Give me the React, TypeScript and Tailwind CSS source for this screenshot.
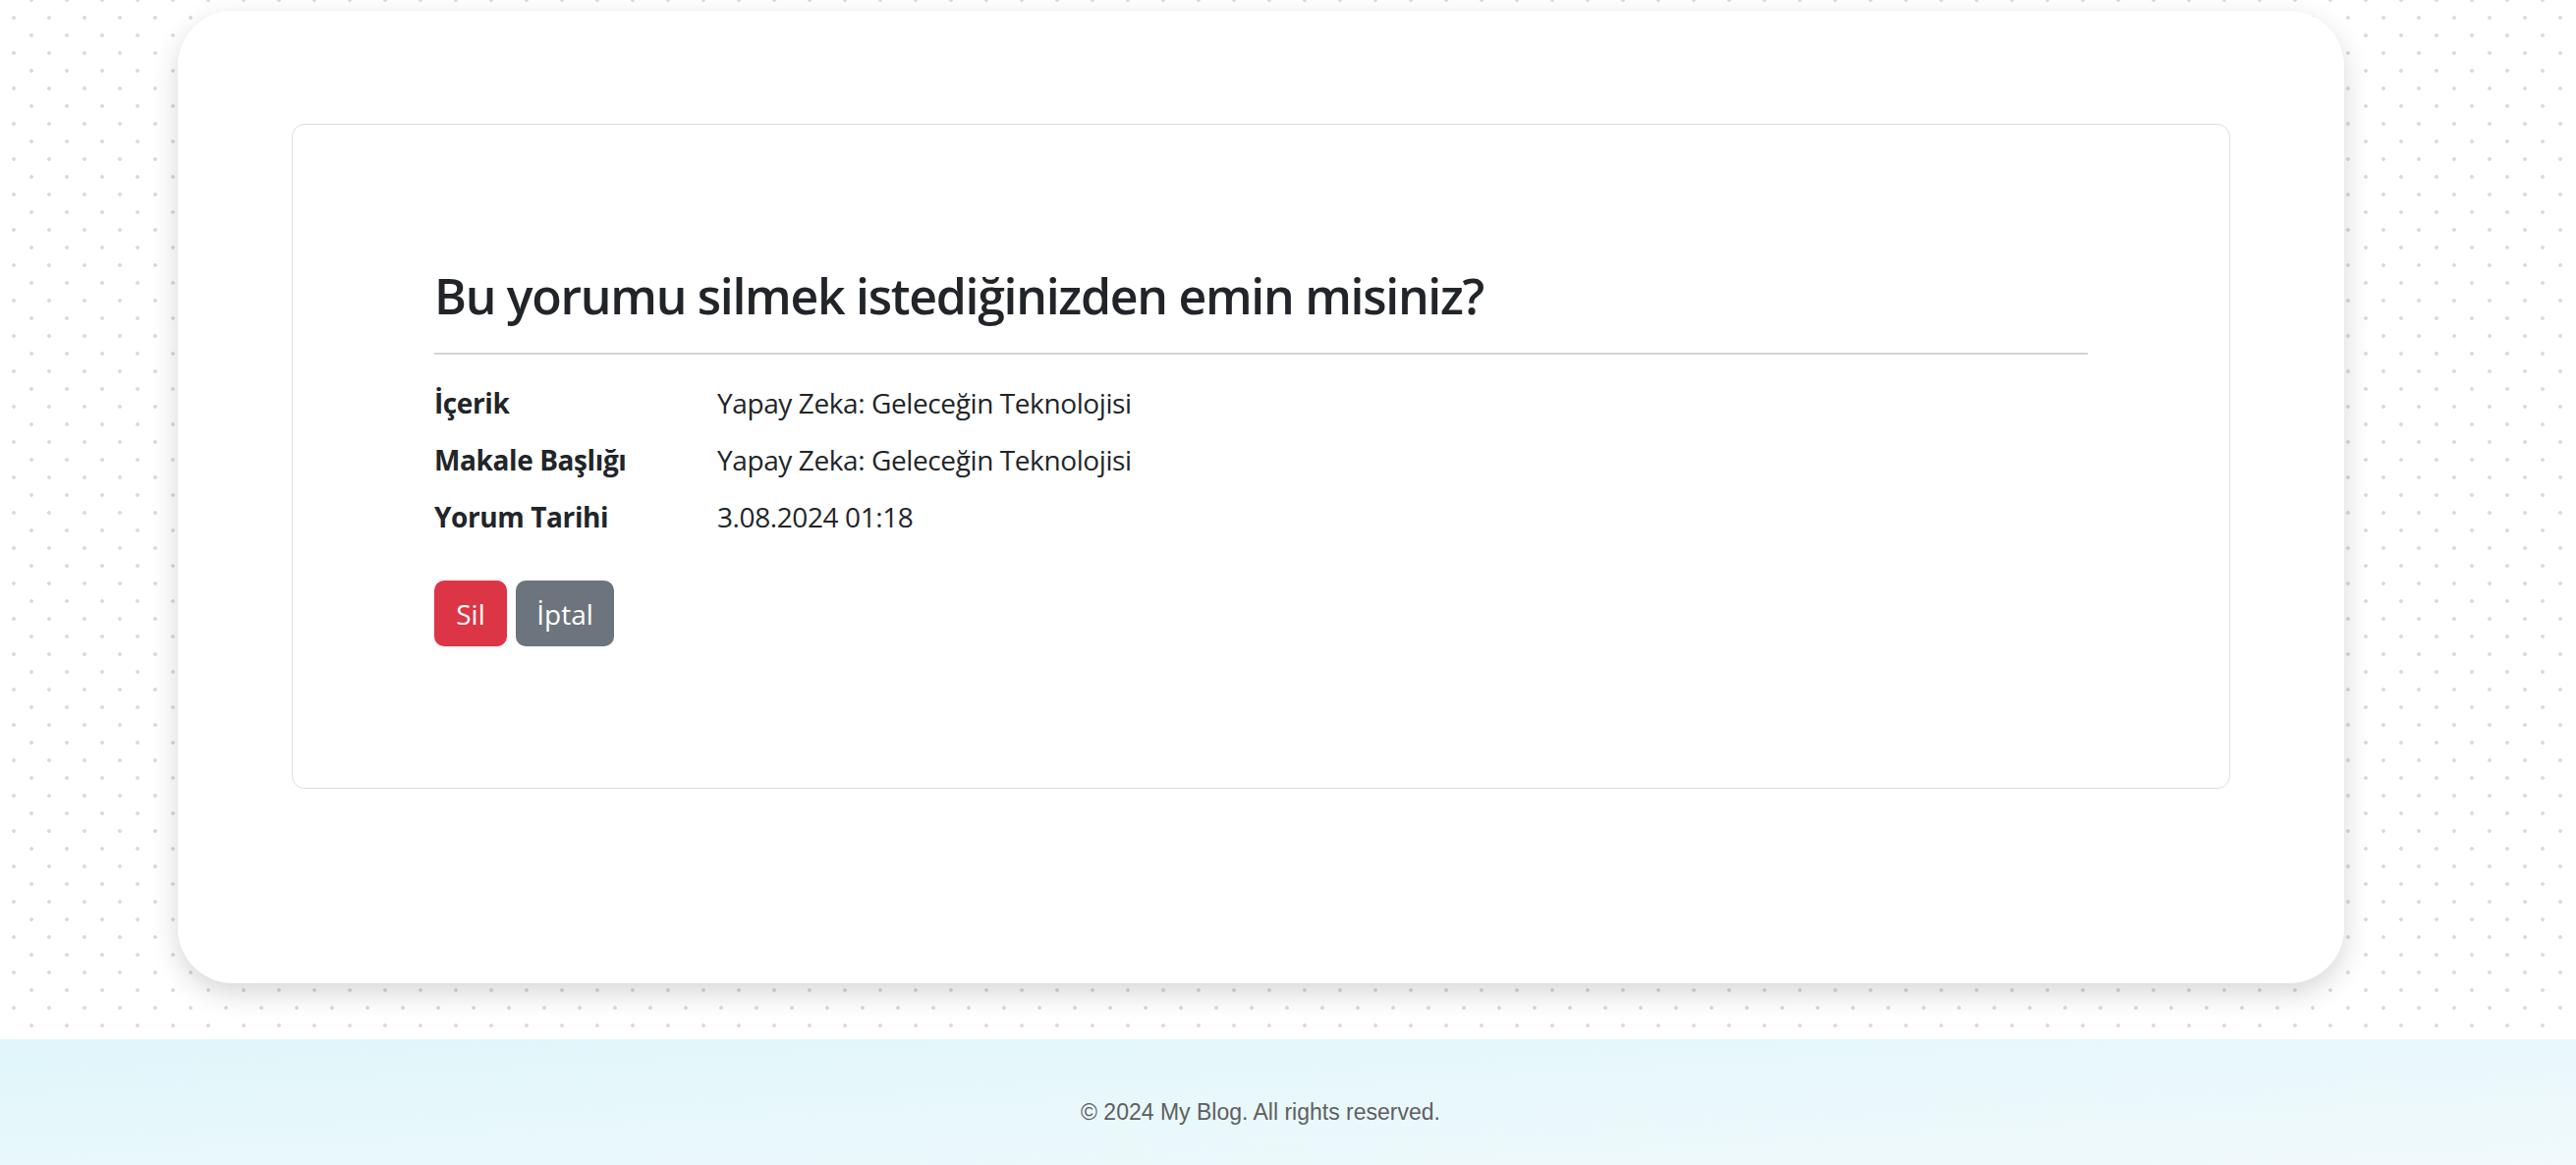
export default function App() {
  const rows = [
    { label: "İçerik", value: "Yapay Zeka: Geleceğin Teknolojisi" },
    { label: "Makale Başlığı", value: "Yapay Zeka: Geleceğin Teknolojisi" },
    { label: "Yorum Tarihi", value: "3.08.2024 01:18" },
  ];
  return (
    <div className="min-h-screen w-full bg-white [font-family:'Open_Sans','Noto_Sans',sans-serif] text-[#212529]">
      <div className="pt-[11px] pb-[57px] [background-image:radial-gradient(circle,#dcdcdc_1.6px,transparent_2.2px),radial-gradient(circle,#dcdcdc_1.6px,transparent_2.2px)] [background-size:36px_36px] [background-position:-4px_0px,14px_18px]">
        <div className="ml-[181px] w-[2205px] bg-white rounded-[56px] shadow-[0_10px_28px_rgba(0,0,0,0.16)] px-[116px] pt-[115px] pb-[198px]">
          <div className="border border-[#dcdfe3] rounded-[13px] p-[144px]">
            <h2 className="text-[50px] leading-[1.2] font-semibold tracking-[-1.3px]">
              Bu yorumu silmek istediğinizden emin misiniz?
            </h2>
            <div className="mt-[28px] border-t-2 border-[#d5d5d5]" />
            <div className="mt-[20px] grid grid-cols-[288px_1fr] text-[28px] leading-[58px] tracking-[-0.4px]">
              {rows.map((r) => (
                <div key={r.label} className="contents">
                  <div className="font-bold">{r.label}</div>
                  <div>{r.value}</div>
                </div>
              ))}
            </div>
            <div className="mt-[36px] flex gap-[9px] text-[28px]">
              <button className="h-[67px] w-[74px] rounded-[10px] bg-[#dc3545] text-white">Sil</button>
              <button className="h-[67px] w-[100px] rounded-[10px] bg-[#6c757d] text-white">İptal</button>
            </div>
          </div>
        </div>
      </div>
      <footer className="h-[148px] bg-gradient-to-br from-[#e0f6fa] to-[#f2fafc] flex items-center justify-center pr-[56px]">
        <p className="[font-family:'Liberation_Sans',Arial,sans-serif] text-[23px] text-[#5f5f5f]">
          © 2024 My Blog. All rights reserved.
        </p>
      </footer>
    </div>
  );
}
